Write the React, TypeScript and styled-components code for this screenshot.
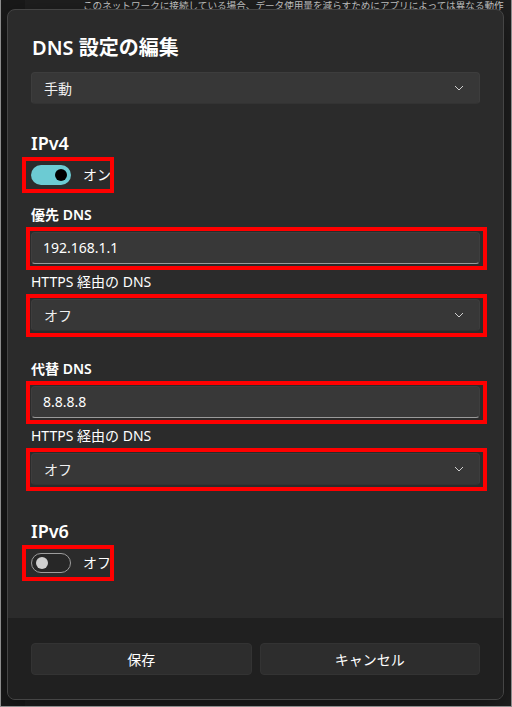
import styled, { createGlobalStyle, css } from "styled-components"

const FONT = `"Noto Sans", "Noto Sans CJK JP", sans-serif`

const GlobalStyle = createGlobalStyle`
    html, body {
        margin: 0;
        padding: 0;
        background: #1c1c1c;
        overflow: hidden;
    }
    * {
        box-sizing: border-box;
    }
`

const Screen = styled.div`
    position: relative;
    width: 512px;
    height: 707px;
    background: #202020;
    border: 1px solid #8c8c8c;
    border-top: none;
    overflow: hidden;
    font-family: ${FONT};
    display: flex;
`

const NavPane = styled.div`
    width: 24px;
    flex-shrink: 0;
    background: #1a1a1a;
`

const Backdrop = styled.div`
    flex: 1;
    padding-left: 58px;
    color: #cfcfcf;
    font-size: 9.6px;
    line-height: 11px;
    white-space: nowrap;
`

const Dialog = styled.section`
    position: absolute;
    top: 9px;
    left: 6px;
    width: 497px;
    height: 691px;
    display: flex;
    flex-direction: column;
    background: #2b2b2b;
    border: 1px solid #454545;
    border-radius: 8px;
    overflow: hidden;
    box-shadow: 0 8px 32px rgba(0, 0, 0, 0.5);
`

const Body = styled.div`
    flex: 1;
    display: flex;
    flex-direction: column;
    align-items: flex-start;
    padding: 24px 23px 0 23px;
`

const Title = styled.h2`
    margin: 0 0 0 1px;
    font-size: 20px;
    line-height: 28px;
    font-weight: 600;
    color: #ffffff;
`

const SectionHeading = styled.h3<{ $mt: number }>`
    margin: ${p => p.$mt}px 0 0;
    font-size: 18px;
    line-height: 24px;
    font-weight: 600;
    color: #ffffff;
`

const FieldLabel = styled.div<{ $mt: number; $strong?: boolean }>`
    margin-top: ${p => p.$mt}px;
    font-size: 14px;
    line-height: 20px;
    font-weight: ${p => (p.$strong ? 600 : 400)};
    color: #ffffff;
`

const Marked = styled.div<{ $mt: number; $inline?: boolean }>`
    position: relative;
    margin-top: ${p => p.$mt}px;
    align-self: ${p => (p.$inline ? "flex-start" : "stretch")};
    &::after {
        content: "";
        position: absolute;
        border: 4px solid #ff0000;
        pointer-events: none;
        ${p =>
            p.$inline
                ? css`
                      top: -8px;
                      left: -9px;
                      right: -3px;
                      bottom: -8px;
                  `
                : css`
                      top: -5px;
                      left: -5px;
                      right: -7px;
                      bottom: -6px;
                  `}
    }
`

const controlBase = css`
    width: 100%;
    height: 32px;
    border-radius: 4px;
    background: #373737;
    color: #ffffff;
    font-family: ${FONT};
    font-size: 14px;
`

const SelectBox = styled.div<{ $mt?: number }>`
    ${controlBase};
    margin-top: ${p => p.$mt ?? 0}px;
    align-self: stretch;
    display: flex;
    align-items: center;
    justify-content: space-between;
    padding: 0 15px 0 12px;
    border: 1px solid #3d3d3d;
    border-bottom-color: #333333;
    color: #f0f0f0;
`

const TextInput = styled.input`
    ${controlBase};
    display: block;
    padding: 0 11px 1px;
    border: 1px solid #3e3e3e;
    border-bottom: 1px solid #9a9a9a;
    background: #383838;
    outline: none;
`

const ToggleRow = styled.div`
    display: flex;
    align-items: center;
    gap: 12px;
    font-size: 14px;
    line-height: 20px;
    color: #ffffff;
`

const Track = styled.span<{ $on: boolean }>`
    width: 40px;
    height: 20px;
    border-radius: 10px;
    display: flex;
    align-items: center;
    padding: 0 4px;
    justify-content: ${p => (p.$on ? "flex-end" : "flex-start")};
    background: ${p => (p.$on ? "#6ccbd3" : "#272727")};
    border: ${p => (p.$on ? "none" : "1px solid #9d9d9d")};
    &::before {
        content: "";
        width: 12px;
        height: 12px;
        border-radius: 50%;
        background: ${p => (p.$on ? "#000000" : "#cfcfcf")};
    }
`

const Footer = styled.div`
    height: 81px;
    padding: 25px 23px 24px 23px;
    background: #202020;
    display: grid;
    grid-template-columns: 1fr 1fr;
    gap: 8px;
`

const Button = styled.button`
    height: 32px;
    border-radius: 4px;
    border: 1px solid #333333;
    background: #2d2d2d;
    color: #ffffff;
    font-family: ${FONT};
    font-size: 14px;
    cursor: pointer;
`

const Chevron = () => (
    <svg width="10" height="6" viewBox="0 0 10 6" fill="none">
        <path d="M1 1 L5 5 L9 1" stroke="#cfcfcf" strokeWidth="1" />
    </svg>
)

const Select = ({ value, mt }: { value: string; mt?: number }) => (
    <SelectBox $mt={mt}>
        <span>{value}</span>
        <Chevron />
    </SelectBox>
)

const Toggle = ({ on, mt }: { on: boolean; mt: number }) => (
    <Marked $mt={mt} $inline>
        <ToggleRow>
            <Track $on={on} />
            <span>{on ? "オン" : "オフ"}</span>
        </ToggleRow>
    </Marked>
)

const DnsFields = ({ title, address, first }: { title: string; address: string; first: boolean }) => (
    <>
        <FieldLabel $mt={first ? 20 : 28} $strong>{title}</FieldLabel>
        <Marked $mt={7}>
            <TextInput readOnly value={address} />
        </Marked>
        <FieldLabel $mt={8}>HTTPS 経由の DNS</FieldLabel>
        <Marked $mt={7}>
            <Select value="オフ" />
        </Marked>
    </>
)

const App = () => {
    return (
        <>
            <GlobalStyle />
            <Screen>
                <NavPane />
                <Backdrop>このネットワークに接続している場合、データ使用量を減らすためにアプリによっては異なる動作</Backdrop>
                <Dialog>
                    <Body>
                        <Title>DNS 設定の編集</Title>
                        <Select value="手動" mt={10} />
                        <SectionHeading $mt={27}>IPv4</SectionHeading>
                        <Toggle on mt={10} />
                        <DnsFields title="優先 DNS" address="192.168.1.1" first />
                        <DnsFields title="代替 DNS" address="8.8.8.8" first={false} />
                        <SectionHeading $mt={34}>IPv6</SectionHeading>
                        <Toggle on={false} mt={10} />
                    </Body>
                    <Footer>
                        <Button>保存</Button>
                        <Button>キャンセル</Button>
                    </Footer>
                </Dialog>
            </Screen>
        </>
    )
}

export default App
